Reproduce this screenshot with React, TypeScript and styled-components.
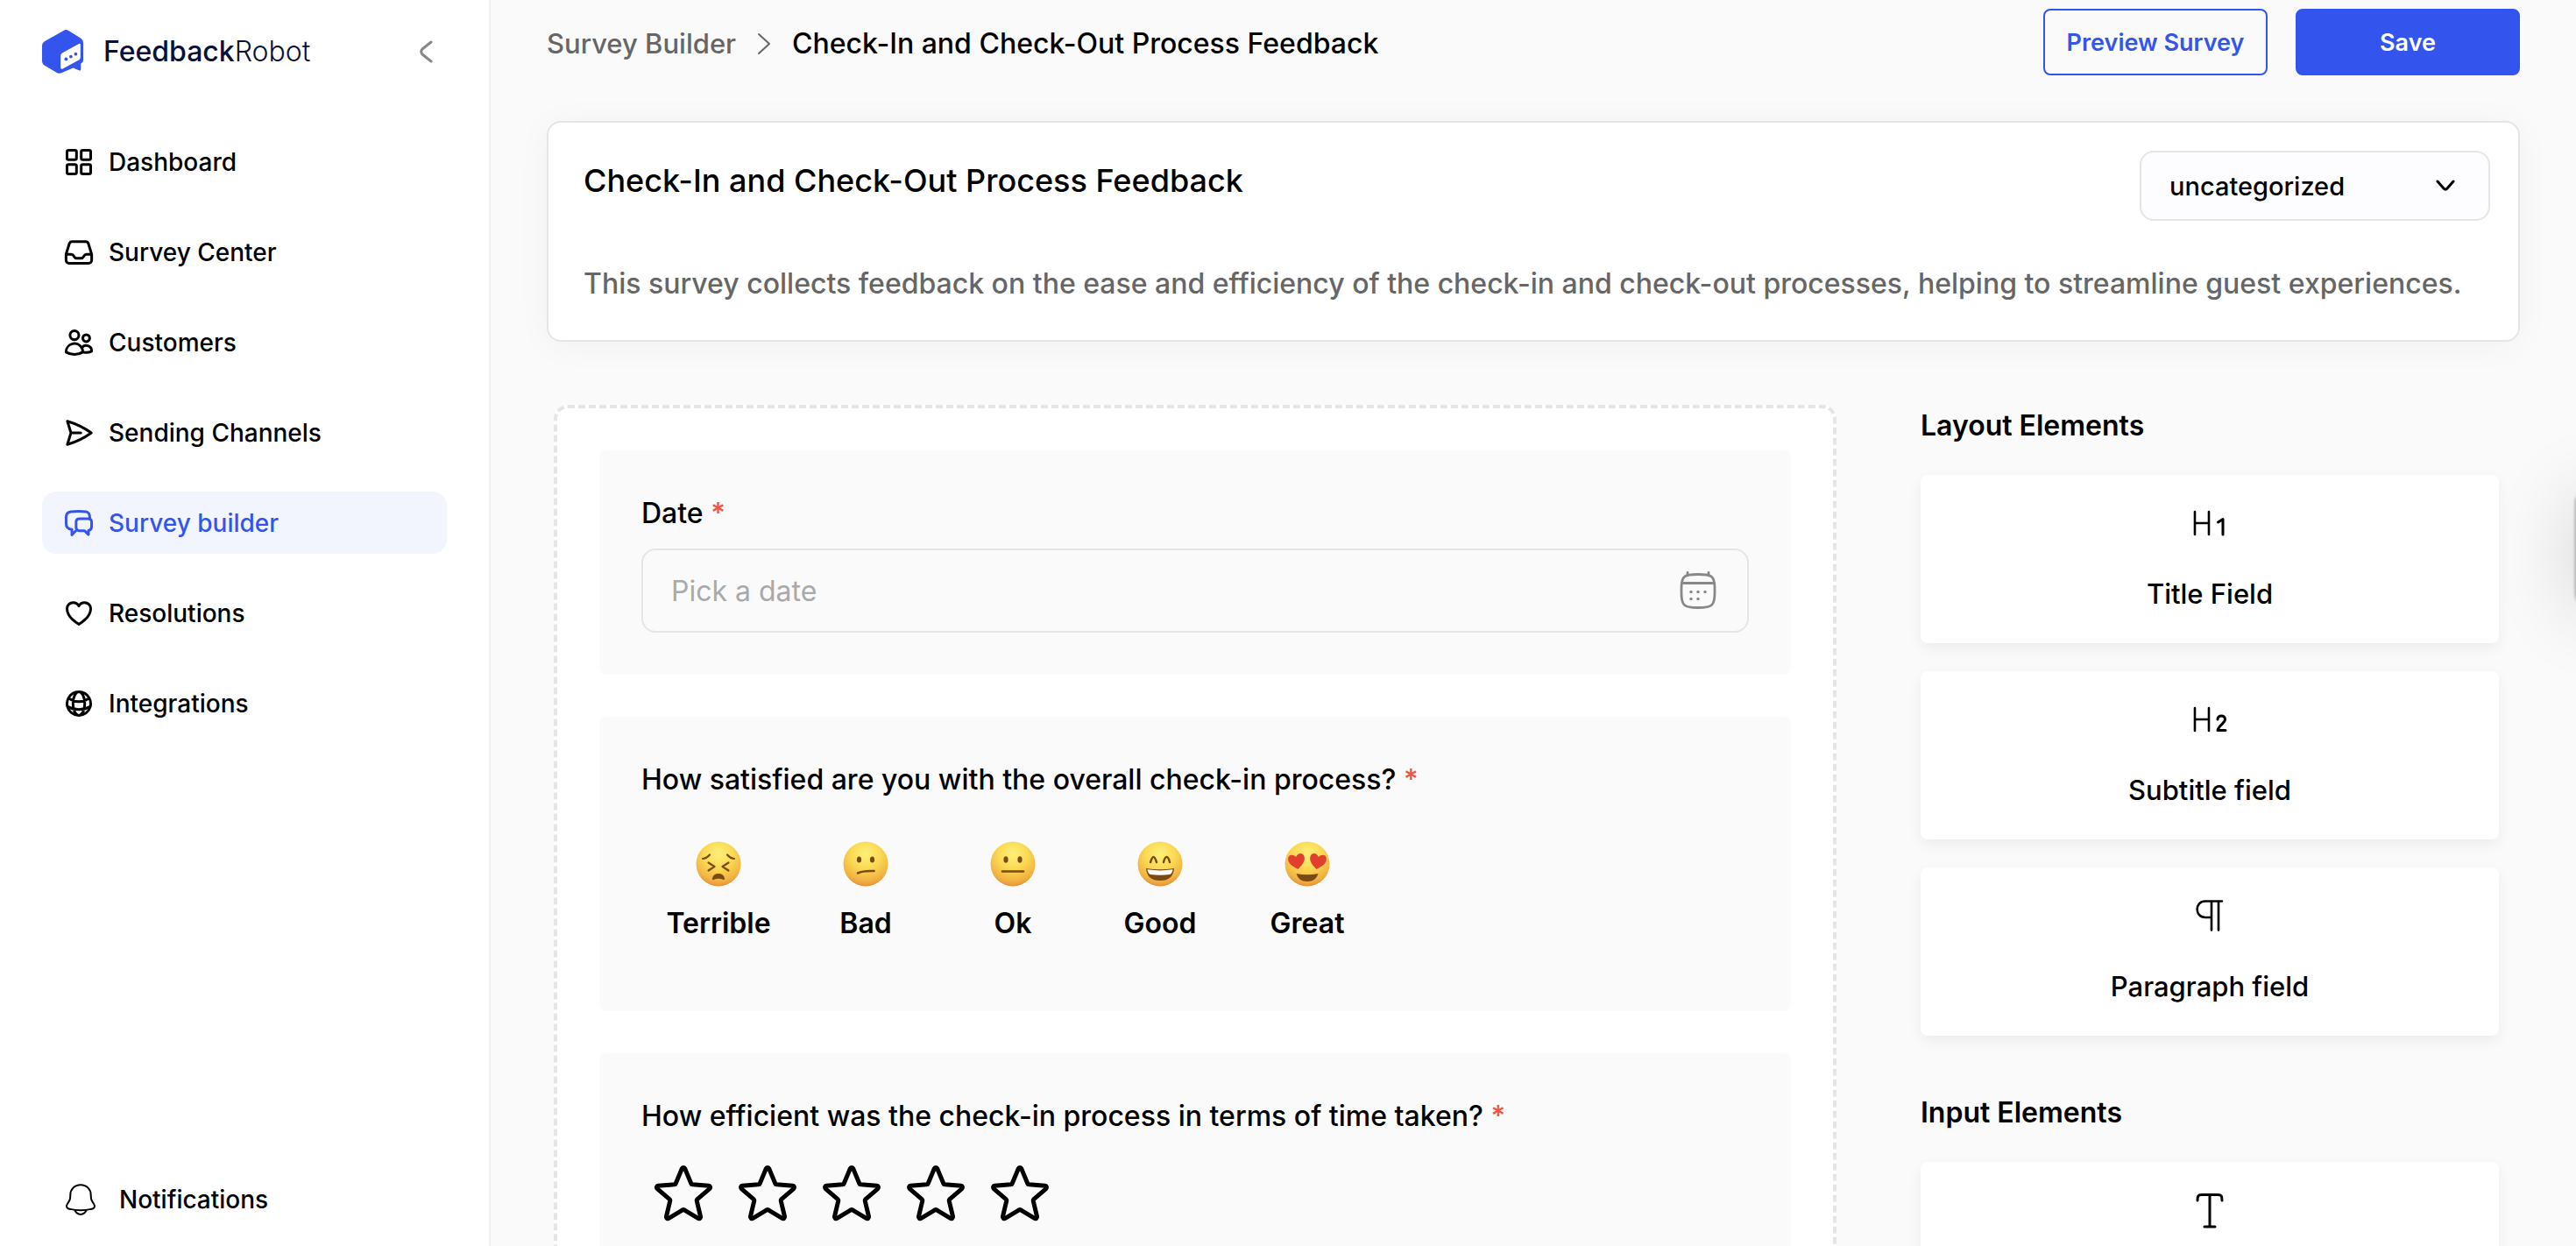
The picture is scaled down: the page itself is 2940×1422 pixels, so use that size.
import React, { useState } from "react";
import styled, { createGlobalStyle, css } from "styled-components";
import {
  HiOutlineGlobeAlt,
  HiOutlineHeart,
  HiOutlineInbox,
  HiOutlinePaperAirplane,
  HiOutlineStar,
  HiOutlineUsers,
} from "react-icons/hi2";

const color = {
  ink: "#000000",
  navy: "#0a1038",
  muted: "#666666",
  faint: "#a9a9a9",
  line: "#e5e5e5",
  page: "#fafafa",
  brand: "#3355ee",
  brandSoft: "#f2f5fd",
  danger: "#ee5344",
};

const GlobalStyle = createGlobalStyle`
  *, *::before, *::after { box-sizing: border-box; }
  body {
    margin: 0;
    background: ${color.page};
    color: ${color.ink};
    font-family: Inter, "Liberation Sans", sans-serif;
    font-weight: 500;
    overflow: hidden;
  }
  h1, h2, p, ul, ol, fieldset { margin: 0; padding: 0; border: 0; }
  ul, ol { list-style: none; }
  button, input, select { font: inherit; color: inherit; }
`;

const Shell = styled.div`
  display: flex;
  height: 100vh;
`;

/* ---------- Sidebar ---------- */

const Sidebar = styled.aside`
  display: flex;
  flex-direction: column;
  flex: 0 0 560px;
  padding: 34px 48px 18px;
  background: #ffffff;
  border-right: 2px solid #f0f0f0;
`;

const BrandRow = styled.div`
  display: flex;
  align-items: center;
  justify-content: space-between;
  height: 50px;
  margin-bottom: 65px;
  padding-right: 16px;
`;

const Brand = styled.a`
  display: flex;
  align-items: center;
  gap: 22px;
  color: ${color.navy};
  text-decoration: none;
  font-size: 32px;
  line-height: 48px;
`;

const BrandLight = styled.span`
  font-weight: 300;
`;

const IconButton = styled.button`
  display: flex;
  padding: 0;
  border: 0;
  background: none;
  color: #888888;
`;

const NavList = styled.ul`
  display: flex;
  flex-direction: column;
  gap: 32px;
`;

const NavLink = styled.a<{ $active?: boolean; $wide?: boolean }>`
  display: flex;
  align-items: center;
  gap: ${(p) => (p.$wide ? "26px" : "16px")};
  height: 71px;
  padding: ${(p) => (p.$wide ? "0 26px" : "0 24px")};
  border-radius: 16px;
  font-size: 28px;
  line-height: 40px;
  text-decoration: none;
  color: ${color.ink};
  ${(p) =>
    p.$active &&
    css`
      color: ${color.brand};
      background: ${color.brandSoft};
    `}

  svg {
    flex: none;
    width: 36px;
    height: 36px;
    stroke-width: 2;
  }
`;

const SidebarFooter = styled.div`
  margin-top: auto;
`;

/* ---------- Main column ---------- */

const Main = styled.main`
  flex: 1;
  min-width: 0;
  padding: 10px 64px 64px;
  overflow-y: auto;
  scrollbar-width: none;
`;

const TopBar = styled.header`
  display: flex;
  align-items: center;
  justify-content: space-between;
  margin-bottom: 52px;
`;

const Crumbs = styled.ol`
  display: flex;
  align-items: center;
  gap: 24px;
  padding-top: 4px;
  font-size: 32px;
  line-height: 48px;
`;

const CrumbLink = styled.a`
  color: ${color.muted};
  font-size: 31px;
  text-decoration: none;
`;

const CrumbItem = styled.li`
  display: flex;
  align-items: center;
  gap: 24px;
  color: ${color.muted};
`;

const Actions = styled.div`
  display: flex;
  gap: 32px;
`;

const ActionButton = styled.button<{ $solid?: boolean }>`
  width: 256px;
  height: 76px;
  padding: 0;
  border: 2px solid ${color.brand};
  border-radius: 8px;
  background: ${(p) => (p.$solid ? color.brand : "transparent")};
  color: ${(p) => (p.$solid ? "#ffffff" : color.brand)};
  font-size: 27px;
  font-weight: 600;
`;

const SummaryCard = styled.section`
  display: flex;
  flex-direction: column;
  gap: 48px;
  padding: 32px 32px 40px 40px;
  background: #ffffff;
  border: 2px solid ${color.line};
  border-radius: 16px;
  box-shadow: 0 4px 40px rgba(0, 0, 0, 0.04);
`;

const SummaryHead = styled.div`
  display: flex;
  align-items: flex-start;
  justify-content: space-between;
`;

const SurveyTitle = styled.h1`
  font-size: 36px;
  line-height: 68px;
  font-weight: 500;
`;

const SurveyText = styled.p`
  color: ${color.muted};
  font-size: 32px;
  line-height: 48px;
`;

const SelectWrap = styled.label`
  display: grid;
  align-items: center;
  width: 400px;

  > * {
    grid-area: 1 / 1;
  }
  > svg {
    justify-self: end;
    margin-right: 40px;
    pointer-events: none;
  }
`;

const Select = styled.select`
  appearance: none;
  width: 100%;
  height: 80px;
  padding: 0 32px;
  border: 2px solid ${color.line};
  border-radius: 16px;
  background: #fdfdff;
  font-size: 29px;
`;

/* ---------- Workspace ---------- */

const Workspace = styled.div`
  display: grid;
  grid-template-columns: minmax(0, 122fr) minmax(0, 55fr);
  align-items: start;
  gap: 96px;
  margin-top: 72px;
  padding: 0 24px 0 8px;
`;

const Canvas = styled.form`
  display: flex;
  flex-direction: column;
  gap: 48px;
  padding: 48px;
  background: #ffffff;
  border: 4px dashed ${color.line};
  border-radius: 16px;
`;

const Question = styled.fieldset`
  min-width: 0;
  padding: 48px;
  border-radius: 8px;
  background: ${color.page};
`;

const questionText = css`
  display: block;
  font-size: 32px;
  line-height: 48px;
`;

const QuestionLabel = styled.label`
  ${questionText}
`;

const QuestionTitle = styled.p`
  ${questionText}
`;

const Required = styled.span`
  color: ${color.danger};
`;

const DateField = styled.div`
  display: flex;
  align-items: center;
  height: 96px;
  margin-top: 16px;
  padding: 0 35px 0 32px;
  border: 2px solid ${color.line};
  border-radius: 16px;
`;

const DateInput = styled.input`
  flex: 1;
  min-width: 0;
  padding: 0;
  border: 0;
  outline: 0;
  background: none;
  font-size: 32px;
  font-weight: 400;

  &::placeholder {
    color: ${color.faint};
    opacity: 1;
  }
`;

const HiddenRadio = styled.input`
  position: absolute;
  opacity: 0;
  pointer-events: none;
`;

const MoodRow = styled.div`
  display: flex;
  gap: 32px;
  margin-top: 16px;
  padding-left: 20px;
`;

const Mood = styled.label`
  display: flex;
  flex-direction: column;
  align-items: center;
  gap: 18px;
  width: 136px;
  padding: 30px 0 28px;
  font-size: 32px;
  line-height: 48px;
  font-weight: 600;
`;

const StarRow = styled.div`
  display: flex;
  gap: 16px;
  margin-top: 24px;
  padding-left: 8px;
`;

const Star = styled.label`
  display: flex;

  svg {
    width: 80px;
    height: 80px;
  }
`;

/* ---------- Palette ---------- */

const Palette = styled.aside`
  display: flex;
  flex-direction: column;
  gap: 64px;
`;

const PaletteGroup = styled.section`
  display: flex;
  flex-direction: column;
  gap: 32px;
`;

const PaletteHeading = styled.h2`
  font-size: 32px;
  line-height: 48px;
  font-weight: 600;
`;

const PaletteCard = styled.button`
  display: flex;
  flex-direction: column;
  align-items: center;
  gap: 32px;
  min-height: 192px;
  padding: 32px;
  border: 0;
  border-radius: 8px;
  background: #ffffff;
  box-shadow: 0 6px 16px rgba(20, 20, 50, 0.06);
  font-size: 31px;
  line-height: 48px;
  font-weight: 500;
`;

/* Collapsed help tab, tucked just past the right edge of the window. */
const EdgeTab = styled.div`
  position: fixed;
  top: 562px;
  right: -64px;
  width: 64px;
  height: 128px;
  border-radius: 12px;
  background: #ffffff;
  box-shadow:
    0 0 4px rgba(0, 0, 0, 0.5),
    0 6px 90px rgba(0, 0, 0, 0.18);
`;

/* ---------- Drawings ---------- */

const LogoMark = () => (
  <svg width="48" height="50" viewBox="0 0 48 50" aria-hidden="true">
    <path
      d="M24.5 1Q27.400 -0.800 30.300 1L44 9.600Q47 11.600 47 15V35Q47 37.500 44.300 38.500V45.200Q44.300 46.800 42.600 46.400L35.500 43.600L22.500 49Q19.500 50.600 16.500 48.800L3 40.800Q0 39 0 35.600V18Q0 14.800 2.800 13.200Z"
      fill={color.brand}
    />
    <path
      d="M23 26.600L42 15.900Q43.800 15.200 43.800 17V31.500Q43.800 33.600 42 34.600L23.500 44.400Q21.200 45.400 21.200 43V29.600Q21.200 27.600 23 26.600Z"
      fill="#ffffff"
    />
    <g fill={color.brand}>
      <circle cx="27.400" cy="33.400" r="1.900" />
      <circle cx="32.900" cy="30.600" r="1.900" />
      <circle cx="38.400" cy="27.700" r="1.900" />
    </g>
  </svg>
);

const Chevron = ({ d, w, h, stroke = 3 }: { d: string; w: number; h: number; stroke?: number }) => (
  <svg
    width={w}
    height={h}
    viewBox={`0 0 ${w} ${h}`}
    fill="none"
    stroke="currentColor"
    strokeWidth={stroke}
    strokeLinecap="round"
    strokeLinejoin="round"
    aria-hidden="true"
  >
    <path d={d} />
  </svg>
);

const GridIcon = () => (
  <svg viewBox="0 0 24 24" fill="none" stroke="currentColor" aria-hidden="true">
    <rect x="3" y="3" width="7.200" height="7.200" rx="1.200" />
    <rect x="13.800" y="3" width="7.200" height="7.200" rx="1.200" />
    <rect x="3" y="13.800" width="7.200" height="7.200" rx="1.200" />
    <rect x="13.800" y="13.800" width="7.200" height="7.200" rx="1.200" />
  </svg>
);

const ChatIcon = () => (
  <svg
    viewBox="0 0 24 24"
    fill="none"
    stroke="currentColor"
    strokeLinecap="round"
    strokeLinejoin="round"
    aria-hidden="true"
  >
    <path d="M20.400 8.600C20.400 5.500 19.600 3.600 17.500 3.300C14 2.900 9.500 2.900 6 3.300C3.400 3.600 2.300 5.200 2.300 7.500V12.500C2.300 14.800 3.500 16.500 6.700 16.800V21L9.800 17.700" />
    <path d="M12.600 8.600H19Q21.700 8.600 21.700 11.200V14.700Q21.700 17.200 19.300 17.600V20.700L16.300 17.800H12.600Q9.900 17.800 9.900 15.200V11.200Q9.900 8.600 12.600 8.600Z" />
  </svg>
);

const BellIcon = () => (
  <svg
    viewBox="0 0 36 36"
    fill="none"
    stroke="currentColor"
    strokeLinecap="round"
    strokeLinejoin="round"
    aria-hidden="true"
  >
    <path d="M18 1.200C11 1.200 6.300 6.500 6.300 12.500C6.300 18 5.500 19 3.300 22.300C0.800 26 2 28.200 6 28.900C13 30.600 23 30.600 30 28.900C34 28.200 35.200 26 32.700 22.300C30.500 19 29.700 18 29.700 12.500C29.700 6.500 25 1.200 18 1.200Z" />
    <path d="M11.500 30.200C12.800 33.400 15 34.900 18 34.900S23.200 33.400 24.500 30.200" />
  </svg>
);

const CalendarIcon = () => (
  <svg
    width="42"
    height="46"
    viewBox="0 0 42 46"
    fill="none"
    stroke="#888888"
    strokeWidth="2.800"
    strokeLinecap="round"
    aria-hidden="true"
  >
    <path d="M21 4.500C6 4.500 2 5.500 2 20V26C2 40 5 42.500 21 42.500S40 40 40 26V20C40 5.500 36 4.500 21 4.500Z" />
    <path d="M2.500 14.500H39.500M9 2.500V5.500M33 2.500V5.500" />
    <g fill="#888888" stroke="none">
      <circle cx="13" cy="24.500" r="1.700" />
      <circle cx="21" cy="24.500" r="1.700" />
      <circle cx="29" cy="24.500" r="1.700" />
      <circle cx="13" cy="32.500" r="1.700" />
      <circle cx="21" cy="32.500" r="1.700" />
    </g>
  </svg>
);

type FaceKind = "terrible" | "bad" | "ok" | "good" | "great";

const heart = "M0 5C-4 2-5.500 0-5-2.500C-4.500-5-1.500-5 0-2.800C1.500-5 4.500-5 5-2.500C5.500 0 4 2 0 5Z";

const faceParts: Record<FaceKind, React.ReactNode> = {
  terrible: (
    <g fill="none" stroke="#7a4a12" strokeWidth="2.200" strokeLinecap="round" strokeLinejoin="round">
      <path d="M8 20Q12 20 16 15.500M44 20Q40 20 36 15.500" />
      <path d="M14.500 24.500L21.500 29L14.500 33.500M37.500 24.500L30.500 29L37.500 33.500" />
      <path d="M20 43Q21 38 26 38T32 43Q26 40.500 20 43Z" fill="#7a4a12" />
    </g>
  ),
  bad: (
    <g>
      <ellipse cx="18.500" cy="21" rx="2.600" ry="3.600" fill="#7a4a12" />
      <ellipse cx="33.500" cy="21" rx="2.600" ry="3.600" fill="#7a4a12" />
      <path d="M17 36.500Q23 33.500 35.500 34" fill="none" stroke="#7a4a12" strokeWidth="2.600" strokeLinecap="round" />
    </g>
  ),
  ok: (
    <g>
      <ellipse cx="18" cy="21" rx="2.600" ry="3.800" fill="#7a4a12" />
      <ellipse cx="34" cy="21" rx="2.600" ry="3.800" fill="#7a4a12" />
      <path d="M14 34.500H38" stroke="#7a4a12" strokeWidth="2.600" strokeLinecap="round" />
    </g>
  ),
  good: (
    <g strokeLinecap="round" strokeLinejoin="round">
      <path
        d="M15 24Q17 18 18.500 18T22 24M30 24Q31.500 18 33.500 18T37 24"
        fill="none"
        stroke="#7a4a12"
        strokeWidth="2.400"
      />
      <path d="M10 31Q26 33.500 42 31Q41 45 26 45T10 31Z" fill="#7a4a12" />
      <path d="M11.500 32.300Q26 34.500 40.500 32.300Q40 37 37 38Q26 39.500 15 38Q12 37 11.500 32.300Z" fill="#ffffff" />
    </g>
  ),
  great: (
    <g>
      <path d={heart} transform="translate(14 23) rotate(-10) scale(1.850)" fill="#e2402f" />
      <path d={heart} transform="translate(38 23) rotate(10) scale(1.850)" fill="#e2402f" />
      <path d="M13.500 37Q26 39.500 38.500 37Q36 46 26 46T13.500 37Z" fill="#7a4a12" />
    </g>
  ),
};

const Face = ({ kind }: { kind: FaceKind }) => (
  <svg width="52" height="52" viewBox="0 0 52 52" aria-hidden="true">
    <defs>
      <radialGradient id={`skin-${kind}`} cx="0.500" cy="0.280" r="0.740">
        <stop offset="0" stopColor="#fdf07a" />
        <stop offset="0.450" stopColor="#fad953" />
        <stop offset="0.800" stopColor="#f2b342" />
        <stop offset="1" stopColor="#e58e38" />
      </radialGradient>
    </defs>
    <circle cx="26" cy="26" r="25.500" fill={`url(#skin-${kind})`} />
    {faceParts[kind]}
  </svg>
);

const PaletteIcon = ({ children }: { children: React.ReactNode }) => (
  <svg
    width="48"
    height="48"
    viewBox="0 0 48 48"
    fill="none"
    stroke="currentColor"
    strokeWidth="2.600"
    strokeLinecap="round"
    strokeLinejoin="round"
    aria-hidden="true"
  >
    {children}
  </svg>
);

const HeadingOneIcon = () => (
  <PaletteIcon>
    <path d="M7 10V36M23 10V36M7 23H23" />
    <path d="M33.500 22L39 18.500V36" strokeWidth="3" />
  </PaletteIcon>
);

const HeadingTwoIcon = () => (
  <PaletteIcon>
    <path d="M7 10V36M23 10V36M7 23H23" />
    <path d="M33 23C33 17.500 41.500 17.500 41.500 23C41.500 27 34.500 29.500 33 35.500H42" strokeWidth="3" />
  </PaletteIcon>
);

const PilcrowIcon = () => (
  <PaletteIcon>
    <path d="M38 6.500H19C6.500 6.500 6.500 25 19 25H26M26 6.500V39.500M34 6.500V39.500" />
  </PaletteIcon>
);

const TypeIcon = () => (
  <PaletteIcon>
    <path d="M10 12C10 7 10.500 5.500 15 5.500H33C37.500 5.500 38 7 38 12M24 5.500V42M18 42H30" strokeWidth="3" />
  </PaletteIcon>
);

/* ---------- Content ---------- */

const navItems = [
  { label: "Dashboard", icon: <GridIcon /> },
  { label: "Survey Center", icon: <HiOutlineInbox /> },
  { label: "Customers", icon: <HiOutlineUsers /> },
  { label: "Sending Channels", icon: <HiOutlinePaperAirplane /> },
  { label: "Survey builder", icon: <ChatIcon />, active: true },
  { label: "Resolutions", icon: <HiOutlineHeart /> },
  { label: "Integrations", icon: <HiOutlineGlobeAlt /> },
];

const moods: { label: string; kind: FaceKind }[] = [
  { label: "Terrible", kind: "terrible" },
  { label: "Bad", kind: "bad" },
  { label: "Ok", kind: "ok" },
  { label: "Good", kind: "good" },
  { label: "Great", kind: "great" },
];

const surveyName = "Check-In and Check-Out Process Feedback";

export default function App() {
  const [category, setCategory] = useState("uncategorized");

  return (
    <>
      <GlobalStyle />
      <Shell>
        <Sidebar>
          <BrandRow>
            <Brand href="#">
              <LogoMark />
              <span>
                Feedback<BrandLight>Robot</BrandLight>
              </span>
            </Brand>
            <IconButton type="button" aria-label="Collapse sidebar">
              <Chevron w={16} h={26} d="M14 2L4 10Q1.500 13 4 16L14 24" />
            </IconButton>
          </BrandRow>
          <nav aria-label="Main">
            <NavList>
              {navItems.map((item) => (
                <li key={item.label}>
                  <NavLink href="#" $active={item.active} aria-current={item.active ? "page" : undefined}>
                    {item.icon}
                    {item.label}
                  </NavLink>
                </li>
              ))}
            </NavList>
          </nav>
          <SidebarFooter>
            <NavLink href="#" $wide>
              <BellIcon />
              Notifications
            </NavLink>
          </SidebarFooter>
        </Sidebar>

        <Main>
          <TopBar>
            <nav aria-label="Breadcrumb">
              <Crumbs>
                <CrumbItem>
                  <CrumbLink href="#">Survey Builder</CrumbLink>
                  <Chevron w={16} h={26} d="M2 2L14 13L2 24" stroke={2} />
                </CrumbItem>
                <li aria-current="page">{surveyName}</li>
              </Crumbs>
            </nav>
            <Actions>
              <ActionButton type="button">Preview Survey</ActionButton>
              <ActionButton type="button" $solid>
                Save
              </ActionButton>
            </Actions>
          </TopBar>

          <SummaryCard>
            <SummaryHead>
              <SurveyTitle>{surveyName}</SurveyTitle>
              <SelectWrap>
                <Select aria-label="Category" value={category} onChange={(e) => setCategory(e.target.value)}>
                  <option value="uncategorized">uncategorized</option>
                </Select>
                <Chevron w={22} h={14} d="M2 2L9 10Q11 12.500 13 10L20 2" />
              </SelectWrap>
            </SummaryHead>
            <SurveyText>
              This survey collects feedback on the ease and efficiency of the check-in and check-out processes, helping
              to streamline guest experiences.
            </SurveyText>
          </SummaryCard>

          <Workspace>
            <Canvas>
              <Question>
                <QuestionLabel htmlFor="visit-date">
                  Date <Required>*</Required>
                </QuestionLabel>
                <DateField>
                  <DateInput id="visit-date" type="text" placeholder="Pick a date" />
                  <CalendarIcon />
                </DateField>
              </Question>

              <Question aria-labelledby="q-satisfied">
                <QuestionTitle id="q-satisfied">
                  How satisfied are you with the overall check-in process? <Required>*</Required>
                </QuestionTitle>
                <MoodRow>
                  {moods.map((mood) => (
                    <Mood key={mood.kind}>
                      <HiddenRadio type="radio" name="satisfied" value={mood.kind} />
                      <Face kind={mood.kind} />
                      {mood.label}
                    </Mood>
                  ))}
                </MoodRow>
              </Question>

              <Question aria-labelledby="q-efficient">
                <QuestionTitle id="q-efficient">
                  How efficient was the check-in process in terms of time taken? <Required>*</Required>
                </QuestionTitle>
                <StarRow>
                  {[1, 2, 3, 4, 5].map((n) => (
                    <Star key={n}>
                      <HiddenRadio type="radio" name="efficient" value={n} aria-label={`${n} of 5`} />
                      <HiOutlineStar />
                    </Star>
                  ))}
                </StarRow>
              </Question>
            </Canvas>

            <Palette>
              <PaletteGroup>
                <PaletteHeading>Layout Elements</PaletteHeading>
                <PaletteCard type="button">
                  <HeadingOneIcon />
                  Title Field
                </PaletteCard>
                <PaletteCard type="button">
                  <HeadingTwoIcon />
                  Subtitle field
                </PaletteCard>
                <PaletteCard type="button">
                  <PilcrowIcon />
                  Paragraph field
                </PaletteCard>
              </PaletteGroup>
              <PaletteGroup>
                <PaletteHeading>Input Elements</PaletteHeading>
                <PaletteCard type="button" aria-label="Text field">
                  <TypeIcon />
                </PaletteCard>
              </PaletteGroup>
            </Palette>
          </Workspace>
        </Main>
      </Shell>
      <EdgeTab />
    </>
  );
}
